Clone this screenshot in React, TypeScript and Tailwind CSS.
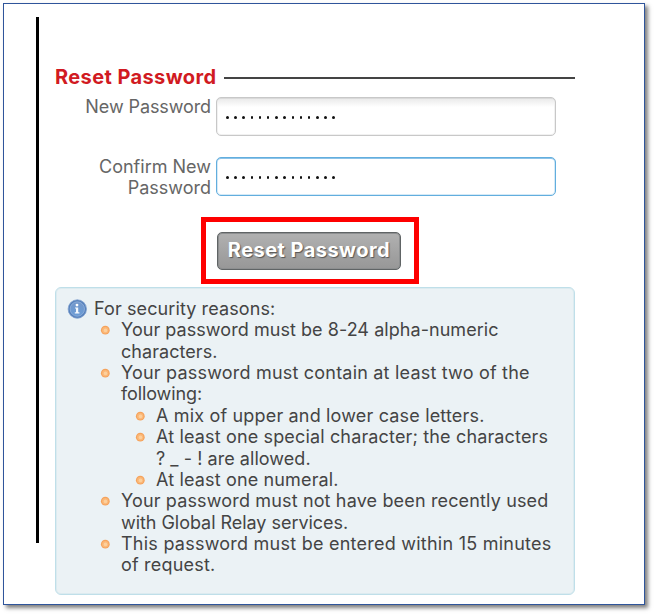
import React from 'react';

interface Line {
  text: string;
  spacing: string;
}

interface Rule {
  id: string;
  lines: Line[];
  children?: Rule[];
}

const SECURITY_RULES: Rule[] = [
  {
    id: 'length',
    lines: [
      { text: 'Your password must be 8-24 alpha-numeric', spacing: 'tracking-[0.05px]' },
      { text: 'characters.', spacing: 'tracking-[0.05px]' },
    ],
  },
  {
    id: 'contain',
    lines: [
      { text: 'Your password must contain at least two of the', spacing: 'tracking-[0.2px]' },
      { text: 'following:', spacing: 'tracking-[-0.1px]' },
    ],
    children: [
      {
        id: 'case',
        lines: [{ text: 'A mix of upper and lower case letters.', spacing: 'tracking-[0.17px]' }],
      },
      {
        id: 'special',
        lines: [
          { text: 'At least one special character; the characters', spacing: 'tracking-[0.15px]' },
          { text: '? _ - ! are allowed.', spacing: 'tracking-[0.05px]' },
        ],
      },
      {
        id: 'numeral',
        lines: [{ text: 'At least one numeral.', spacing: 'tracking-[0.15px]' }],
      },
    ],
  },
  {
    id: 'recent',
    lines: [
      { text: 'Your password must not have been recently used', spacing: 'tracking-[0.15px]' },
      { text: 'with Global Relay services.', spacing: 'tracking-[-0.04px]' },
    ],
  },
  {
    id: 'expiry',
    lines: [
      { text: 'This password must be entered within 15 minutes', spacing: 'tracking-[0.24px]' },
      { text: 'of request.', spacing: 'tracking-[0.2px]' },
    ],
  },
];

const DOTS = Array.from({ length: 14 }, (_, i) => i);

const Bullet: React.FC = () => (
  <svg viewBox="0 0 10 10" className="mt-[6px] h-[10px] w-[10px] shrink-0">
    <circle cx="5.3" cy="5.2" r="4.4" fill="#f5a35c" />
    <circle cx="5.3" cy="5.2" r="3.2" fill="#fbb878" />
    <circle cx="5.5" cy="5.4" r="1.8" fill="#fdd09c" />
  </svg>
);

const InfoIcon: React.FC = () => (
  <svg viewBox="0 0 20 20" className="mt-px h-5 w-5 shrink-0">
    <defs>
      <linearGradient id="info" x1="0" y1="0" x2="0" y2="1">
        <stop offset="0" stopColor="#7397ca" />
        <stop offset="1" stopColor="#6a9cd6" />
      </linearGradient>
    </defs>
    <circle cx="10.3" cy="10" r="9.2" fill="#5580bb" stroke="#7f9fce" strokeWidth="0.8" />
    <circle cx="10.3" cy="10" r="7.2" fill="url(#info)" stroke="#94b3dc" strokeWidth="0.8" />
    <circle cx="10" cy="6.1" r="1.4" fill="#fff" />
    <path d="M8 8.4h3.2v4.8h1.2v1.3H7.8v-1.3H9V9.6H8z" fill="#f4f8fd" />
  </svg>
);

const RuleList: React.FC<{ rules: Rule[]; nested?: boolean }> = ({ rules, nested }) => (
  <ul className={nested ? 'ml-[35px]' : 'ml-[33px]'}>
    {rules.map((rule) => (
      <li key={rule.id}>
        <div className="flex gap-[11px]">
          <Bullet />
          <div>
            {rule.lines.map((line) => (
              <p key={line.text} className={`whitespace-nowrap ${line.spacing}`}>
                {line.text}
              </p>
            ))}
          </div>
        </div>
        {rule.children && <RuleList rules={rule.children} nested />}
      </li>
    ))}
  </ul>
);

const PasswordField: React.FC<{ focused?: boolean }> = ({ focused }) => (
  <div
    className={`flex h-[39px] w-[340px] items-center gap-[5.7px] rounded-[5px] border pl-[9px] pt-[2px] ${
      focused
        ? 'border-[#62aede] bg-white shadow-[inset_0_1px_0_#8dc3e8,inset_0_0_0_1px_#d5eaf7]'
        : 'border-[#c8c8c8] bg-gradient-to-b from-[#e9e9e9] from-0% to-white to-25% shadow-[inset_0_1px_0_#dadada,inset_0_0_0_1px_#f1f1f1]'
    }`}
  >
    {DOTS.map((dot) => (
      <span key={dot} className="h-[2.5px] w-[2.5px] rounded-full bg-[#111]" />
    ))}
  </div>
);

export default function App() {
  return (
    <div className="h-[614px] w-[654px] overflow-hidden bg-white pl-[3px] pt-[3px] font-[Inter,'Liberation_Sans',sans-serif] text-[18px] leading-[21.36px]">
      <main className="flex h-[602px] w-[642px] border border-[#2f559b] bg-white pl-8 pt-[13px] shadow-[3px_3px_4px_rgba(0,0,0,0.5)]">
        <div className="h-[526px] w-[3px] shrink-0 bg-black" />

        <div className="ml-4 mt-[47px] w-[520px]">
          <div className="flex h-[26px] items-center">
            <h1 className="mt-px w-[169px] whitespace-nowrap text-[20px] font-bold tracking-[0.4px] text-[#d11a22]">
              Reset Password
            </h1>
            <div className="mt-[2px] h-[2px] grow bg-[#444]" />
          </div>

          <div className="mt-[7px] flex h-[60px] gap-[5px]">
            <label className="-mt-px w-[156px] whitespace-nowrap text-right tracking-[-0.1px] text-[#666]">New Password</label>
            <PasswordField />
          </div>
          <div className="flex h-[75px] gap-[5px]">
            <label className="-mt-px w-[156px] whitespace-nowrap text-right text-[#666]">
              Confirm New
              <br />
              Password
            </label>
            <PasswordField focused />
          </div>

          <div className="relative -mt-[15px] ml-[146px] flex h-[67px] w-[218px] items-center justify-center border-[5px] border-[#fe0000] pr-[2px]">
            <button className="h-[38px] w-[184px] whitespace-nowrap rounded-[5px] border border-[#606465] bg-gradient-to-b from-[#b1b1b1] to-[#979797] pt-px text-[20px] font-bold tracking-[0.45px] text-white shadow-[inset_0_0_0_1px_#8d8f90] [text-shadow:1px_1px_1px_#555]">
              Reset Password
            </button>
          </div>

          <section className="mt-[3px] h-[308px] w-[520px] rounded-[6px] border border-[#bfdfe9] bg-[#ebf2f5] pl-[11px] pt-[10px] text-[#444] shadow-[inset_0_0_0_1px_#dcebf0]">
            <div className="flex gap-[7px]">
              <InfoIcon />
              <p className="tracking-[0.1px]">For security reasons:</p>
            </div>
            <RuleList rules={SECURITY_RULES} />
          </section>
        </div>
      </main>
    </div>
  );
}
